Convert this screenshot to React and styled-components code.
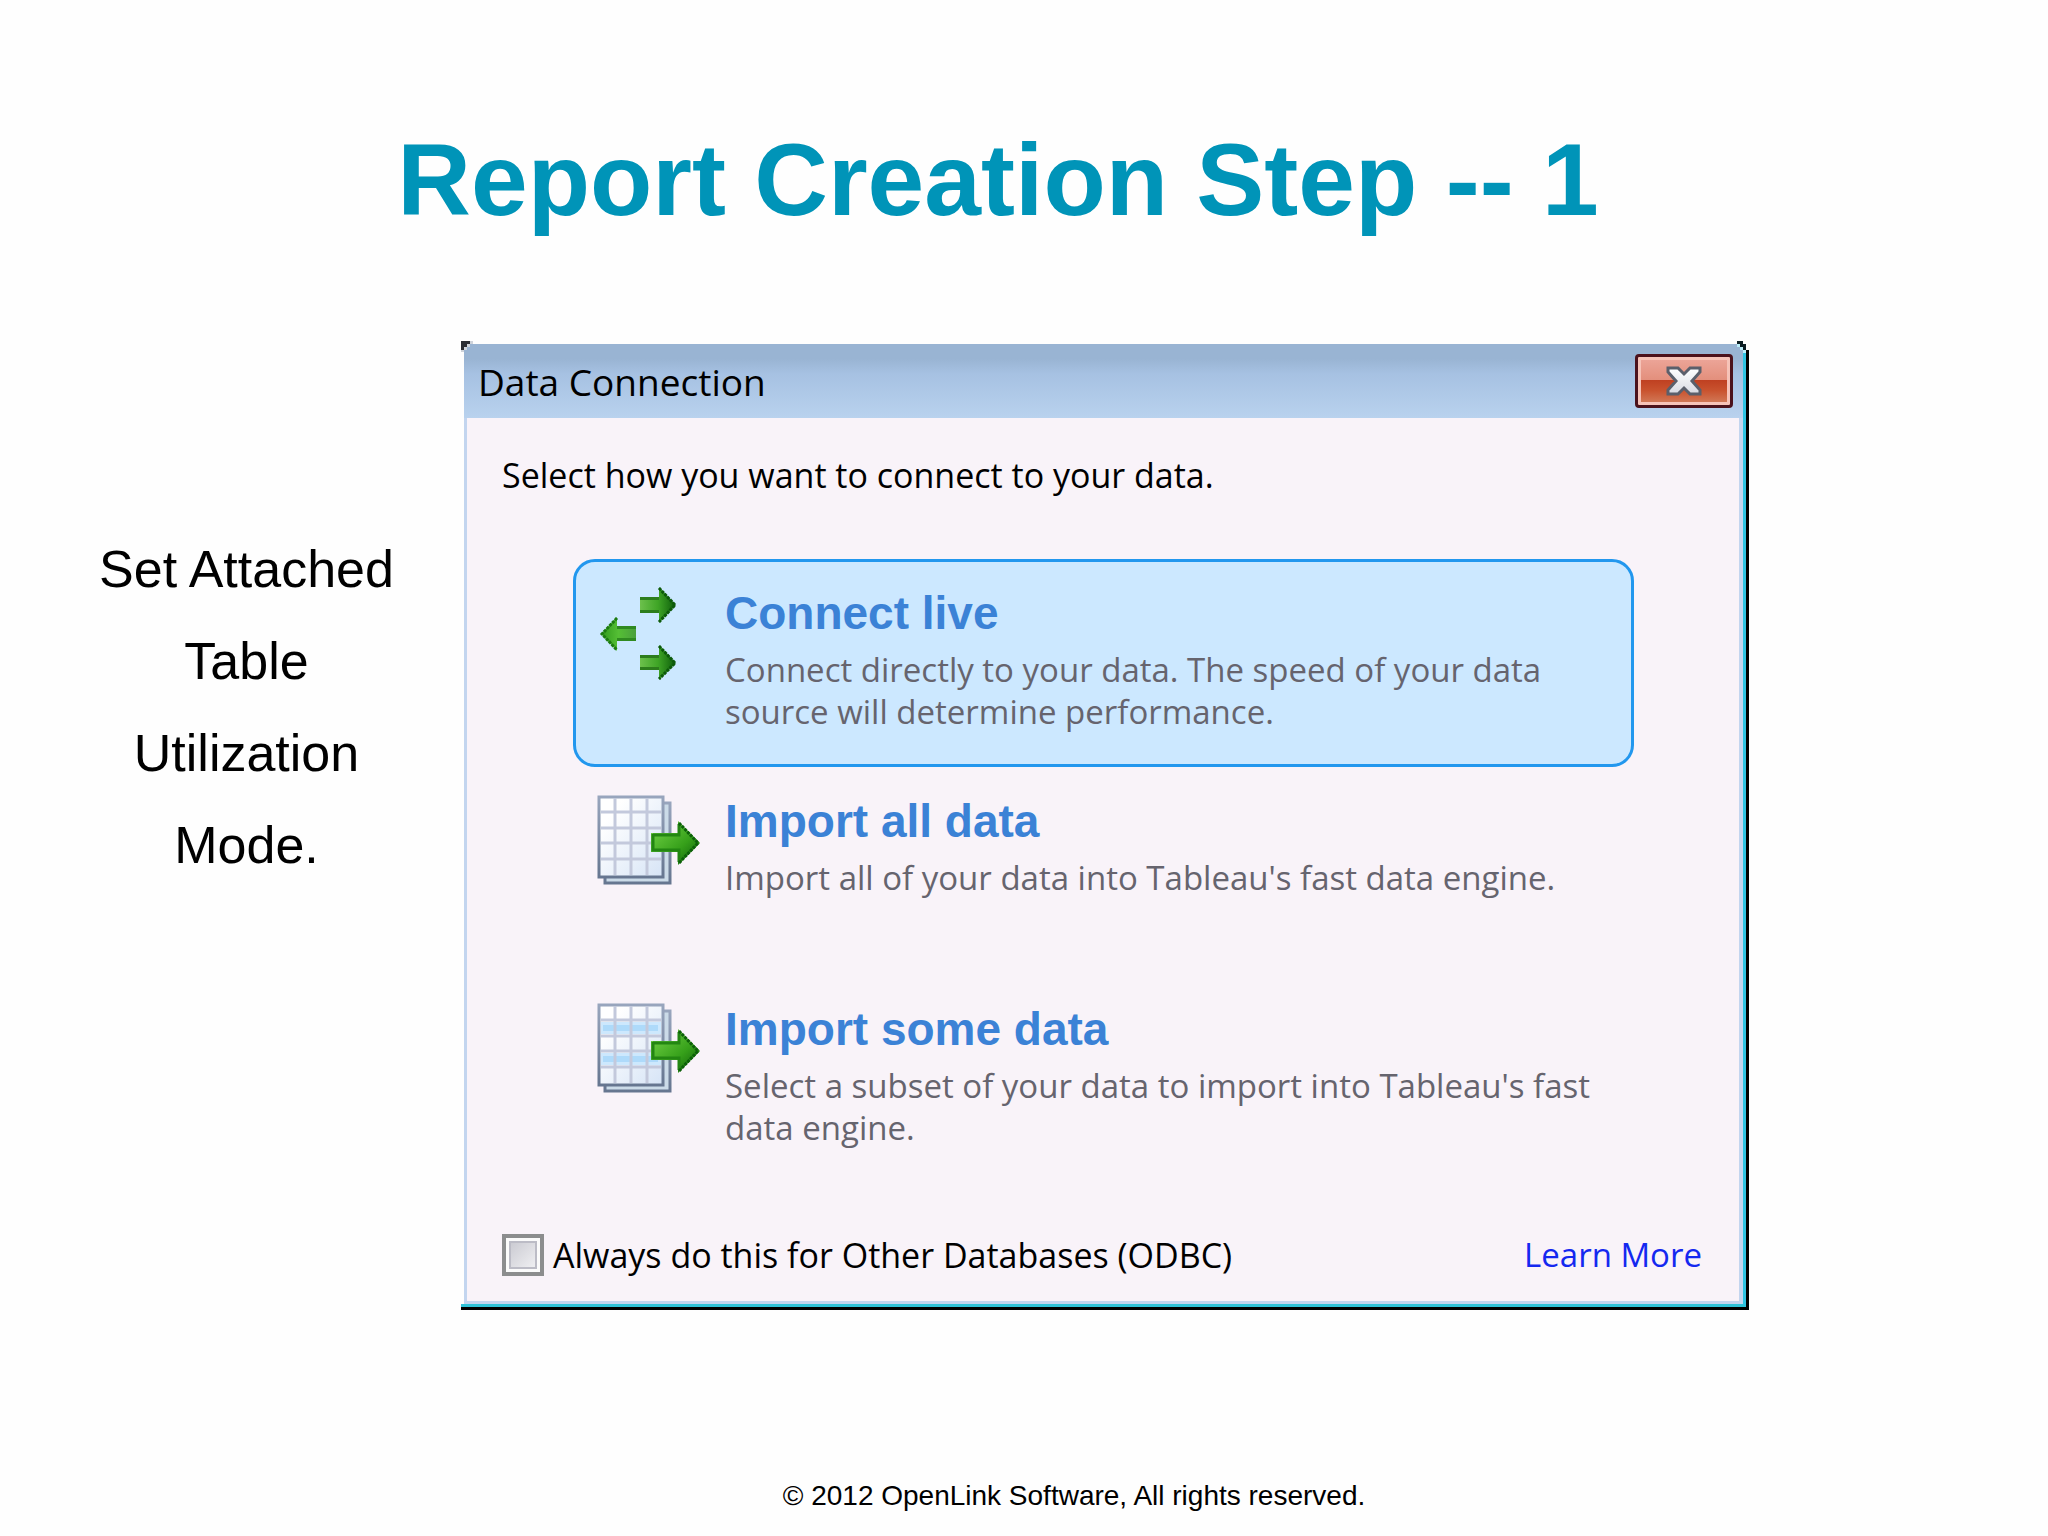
import { useState } from "react";
import styled, { createGlobalStyle } from "styled-components";

const GlobalStyle = createGlobalStyle`
  * {
    box-sizing: border-box;
  }

  body {
    margin: 0;
    background: #fefefe;
    color: #000;
    font-family: "Liberation Sans", Arial, sans-serif;
  }
`;

const options = [
  {
    id: "live",
    title: "Connect live",
    text: "Connect directly to your data. The speed of your data source will determine performance.",
    icon: <LiveIcon />,
  },
  {
    id: "all",
    title: "Import all data",
    text: "Import all of your data into Tableau's fast data engine.",
    icon: <SheetIcon />,
  },
  {
    id: "some",
    title: "Import some data",
    text: "Select a subset of your data to import into Tableau's fast data engine.",
    icon: <SheetIcon striped />,
  },
];

export default function App() {
  const [selected, setSelected] = useState("live");

  return (
    <SSlide>
      <GlobalStyle />
      <IconGradients />
      <STitle>Report Creation Step -- 1</STitle>
      <SMain>
        <SNote>Set Attached Table Utilization Mode.</SNote>
        <SDialog role="dialog" aria-labelledby="dialog-title">
          <SFrame>
            <STitleBar>
              <SDialogTitle id="dialog-title">Data Connection</SDialogTitle>
              <SClose type="button" aria-label="Close">
                <CloseIcon />
              </SClose>
            </STitleBar>
            <SBody>
              <SPrompt>Select how you want to connect to your data.</SPrompt>
              <SOptions>
                {options.map((option) => (
                  <SOption
                    key={option.id}
                    type="button"
                    aria-pressed={selected === option.id}
                    $selected={selected === option.id}
                    onClick={() => setSelected(option.id)}
                  >
                    {option.icon}
                    <SOptionText>
                      <SOptionTitle>{option.title}</SOptionTitle>
                      <SOptionInfo>{option.text}</SOptionInfo>
                    </SOptionText>
                  </SOption>
                ))}
              </SOptions>
              <SActions>
                <SLabel htmlFor="always">
                  <SCheckbox id="always" type="checkbox" />
                  Always do this for Other Databases (ODBC)
                </SLabel>
                <SLink href="#learn-more">Learn More</SLink>
              </SActions>
            </SBody>
          </SFrame>
          <SCorner $side="left" viewBox="0 0 12 12" aria-hidden="true">
            <path d="M0 0H9V3H6V6H3V9H0Z" fill="#2b2d33" />
            <path d="M9 0h3v3H9zM6 3h3v3H6zM3 6h3v3H3zM0 9h3v2H0z" fill="#cfd3da" />
          </SCorner>
          <SCorner $side="right" viewBox="0 0 12 12" aria-hidden="true">
            <path d="M6 0H12V9H9V6H6Z" fill="#fefefe" />
            <path d="M0 0H6V3H9V9H6V6H3V3H0Z" fill="#0b1d22" />
            <path d="M0 3h3v3h3v3h3v3H6V9H3V6H0z" fill="#bdeefa" />
          </SCorner>
        </SDialog>
      </SMain>
      <SFooter>© 2012 OpenLink Software, All rights reserved.</SFooter>
    </SSlide>
  );
}

function IconGradients() {
  return (
    <SDefs aria-hidden="true">
      <defs>
        <linearGradient id="arrow" x1="0" y1="0" x2="1" y2="0">
          <stop offset="0" stopColor="#6cc04c" />
          <stop offset="0.5" stopColor="#3fa526" />
          <stop offset="1" stopColor="#0c5c0a" />
        </linearGradient>
        <linearGradient id="arrowBack" x1="0" y1="0" x2="1" y2="0">
          <stop offset="0" stopColor="#2f9a1c" />
          <stop offset="0.5" stopColor="#55bf35" />
          <stop offset="1" stopColor="#4a9f3c" />
        </linearGradient>
        <linearGradient id="arrowBig" x1="0" y1="0" x2="1" y2="1">
          <stop offset="0.2" stopColor="#62c53a" />
          <stop offset="0.6" stopColor="#36a01a" />
          <stop offset="1" stopColor="#0b5a08" />
        </linearGradient>
        <linearGradient id="sheet" x1="0" y1="0" x2="1" y2="1">
          <stop offset="0.2" stopColor="#ffffff" />
          <stop offset="1" stopColor="#d6e4f6" />
        </linearGradient>
        <linearGradient id="sheetEdge" x1="0" y1="0" x2="0" y2="1">
          <stop offset="0" stopColor="#98a5bd" />
          <stop offset="1" stopColor="#667690" />
        </linearGradient>
        <linearGradient id="cross" x1="0" y1="0" x2="0" y2="1">
          <stop offset="0" stopColor="#ffffff" />
          <stop offset="1" stopColor="#d8dae2" />
        </linearGradient>
      </defs>
    </SDefs>
  );
}

function LiveIcon() {
  return (
    <SIcon viewBox="0 -2 104 96" aria-hidden="true">
      <path d="M43 10H62V0L79 18L62 36V26H43Z" fill="url(#arrow)" />
      <path d="M43 10H62V13H43ZM43 23H62V26H43Z" fill="#2c7d1c" />
      <path d="M62 1L78 18L62 35" fill="none" stroke="#0d5a0b" strokeWidth="3" strokeDasharray="3 1" />
      <path d="M39 39H20V30L4 47L20 64V54H39Z" fill="url(#arrowBack)" />
      <path d="M20 39H39V42H20ZM20 51H39V54H20Z" fill="#2f8a20" />
      <path d="M20 31L5 47L20 63" fill="none" stroke="#1d7a12" strokeWidth="3" strokeDasharray="3 1" />
      <path d="M43 68H62V58L79 76L62 93V83H43Z" fill="url(#arrow)" />
      <path d="M43 68H62V71H43ZM43 80H62V83H43Z" fill="#2c7d1c" />
      <path d="M62 59L78 76L62 92" fill="none" stroke="#0d5a0b" strokeWidth="3" strokeDasharray="3 1" />
    </SIcon>
  );
}

function SheetIcon({ striped }) {
  return (
    <SIcon viewBox="1 1 104 96" aria-hidden="true">
      <rect x="9" y="11" width="65" height="80" fill="#cbdbe8" stroke="url(#sheetEdge)" strokeWidth="3" />
      <rect x="3" y="5" width="64" height="80" fill="url(#sheet)" stroke="url(#sheetEdge)" strokeWidth="3" />
      {striped && (
        <>
          <path d="M5 22H65V34H5ZM5 53H65V65H5Z" fill="#cde8fd" />
          <path d="M7 25H62V31H7ZM7 56H62V62H7Z" fill="#aedafa" />
        </>
      )}
      <path d="M19 6V83M35 6V83M51 6V83M5 20H65M5 36H65M5 51H65M5 67H65" stroke="#c3c9dc" strokeWidth="3" />
      <path d="M55 41H82V29L104 51L82 73V60H55Z" fill="url(#arrowBig)" />
      <path d="M57 43H83V32" fill="none" stroke="#238612" strokeWidth="3" />
      <path d="M57 42V58H83V70" fill="none" stroke="#238612" strokeWidth="3" />
      <path d="M83 31L102 51L83 71" fill="none" stroke="#0d600a" strokeWidth="3" strokeDasharray="3 1" />
    </SIcon>
  );
}

function CloseIcon() {
  return (
    <svg width="36" height="30" viewBox="0 0 36 30" aria-hidden="true">
      <path
        d="M2 2H12L18 8L24 2H34V6L26 15L34 24V28H24L18 22L12 28H2V24L10 15L2 6Z"
        fill="url(#cross)"
        stroke="#5b5f6b"
        strokeWidth="3"
      />
    </svg>
  );
}

const SSlide = styled.div`
  min-height: 100vh;
  display: flex;
  flex-direction: column;
`;

const STitle = styled.h1`
  margin: 0;
  padding: 120px 52px 0 0;
  color: #0094b8;
  font-size: 102px;
  line-height: 120px;
  text-align: center;
`;

const SMain = styled.main`
  display: grid;
  grid-template-columns: 461fr 1288fr 299fr;
  align-items: start;
  margin-top: 101px;
`;

const SNote = styled.p`
  justify-self: center;
  max-width: 352px;
  margin: 0;
  padding: 182px 0 0 32px;
  font-size: 52px;
  line-height: 92px;
  text-align: center;
`;

const SDialog = styled.section`
  position: relative;
  padding-top: 3px;
  border-right: 3px solid #000;
  border-bottom: 3px solid #000;
  font-family: "Open Sans", "Noto Sans", Tahoma, sans-serif;
`;

const SCorner = styled.svg`
  position: absolute;
  top: 0;
  ${({ $side }) => ($side === "left" ? "left: 0;" : "right: -3px;")}
  width: 12px;
  height: 12px;
`;

const SFrame = styled.div`
  padding-left: 3px;
  border-right: 3px solid #2fc3e2;
  border-bottom: 3px solid #2fc3d8;
`;

const STitleBar = styled.header`
  display: flex;
  align-items: center;
  justify-content: space-between;
  height: 74px;
  padding: 0 10px 0 14px;
  background: linear-gradient(#99b4d3 20%, #a6c1e2 40%, #b9d2ee);
`;

const SDialogTitle = styled.h2`
  margin: 0;
  font-size: 37px;
  font-weight: 400;
`;

const SClose = styled.button`
  display: flex;
  align-items: center;
  justify-content: center;
  width: 98px;
  height: 54px;
  padding: 0;
  border: 3px solid #4b121c;
  border-radius: 4px;
  background: linear-gradient(#eda79b, #e38f7c 48%, #bf4021 48%, #c9532f 70%, #d3805f);
  box-shadow: inset 0 0 0 3px #f6c3b8;
`;

const SBody = styled.div`
  padding: 36px 37px 25px 35px;
  border: solid #c3d5ef;
  border-width: 0 4px 3px 3px;
  background: #f9f3f9;
`;

const SPrompt = styled.p`
  margin: 0;
  font-size: 34px;
  line-height: 42px;
`;

const SOptions = styled.div`
  margin: 63px 68px 51px 71px;
`;

const SOption = styled.button`
  display: flex;
  align-items: flex-start;
  gap: 24px;
  width: 100%;
  min-height: 208px;
  padding: 23px 8px 23px 21px;
  border: 3px solid ${({ $selected }) => ($selected ? "#2297ee" : "transparent")};
  border-radius: 22px;
  background: ${({ $selected }) => ($selected ? "#cce8ff" : "transparent")};
  font-family: inherit;
  text-align: left;
`;

const SIcon = styled.svg`
  flex: none;
  width: 104px;
  height: 96px;
`;

const SOptionText = styled.span`
  display: flex;
  flex-direction: column;
  gap: 8px;
`;

const SOptionTitle = styled.span`
  color: #3b82d6;
  font-family: "Liberation Sans", Arial, sans-serif;
  font-size: 46px;
  font-weight: 700;
  line-height: 56px;
`;

const SOptionInfo = styled.span`
  color: #66646e;
  font-size: 33px;
  line-height: 42px;
`;

const SActions = styled.div`
  display: flex;
  align-items: center;
  justify-content: space-between;
  font-size: 33px;
  line-height: 42px;
`;

const SLabel = styled.label`
  display: flex;
  align-items: center;
  gap: 9px;
  font-size: 34px;
`;

const SCheckbox = styled.input`
  appearance: none;
  width: 42px;
  height: 42px;
  margin: 0;
  border: 4px solid #8c8d8e;
  background: linear-gradient(135deg, #c4c4cc, #f6f6f8);
  box-shadow: inset 0 0 0 3px #fbfbfb, inset 0 0 0 5px #bcbcc6;
`;

const SLink = styled.a`
  color: #1428f0;
  text-decoration: none;
`;

const SFooter = styled.footer`
  margin-top: auto;
  padding: 0 0 20px 100px;
  font-size: 28px;
  line-height: 40px;
  text-align: center;
`;

const SDefs = styled.svg`
  position: absolute;
  width: 0;
  height: 0;
`;
